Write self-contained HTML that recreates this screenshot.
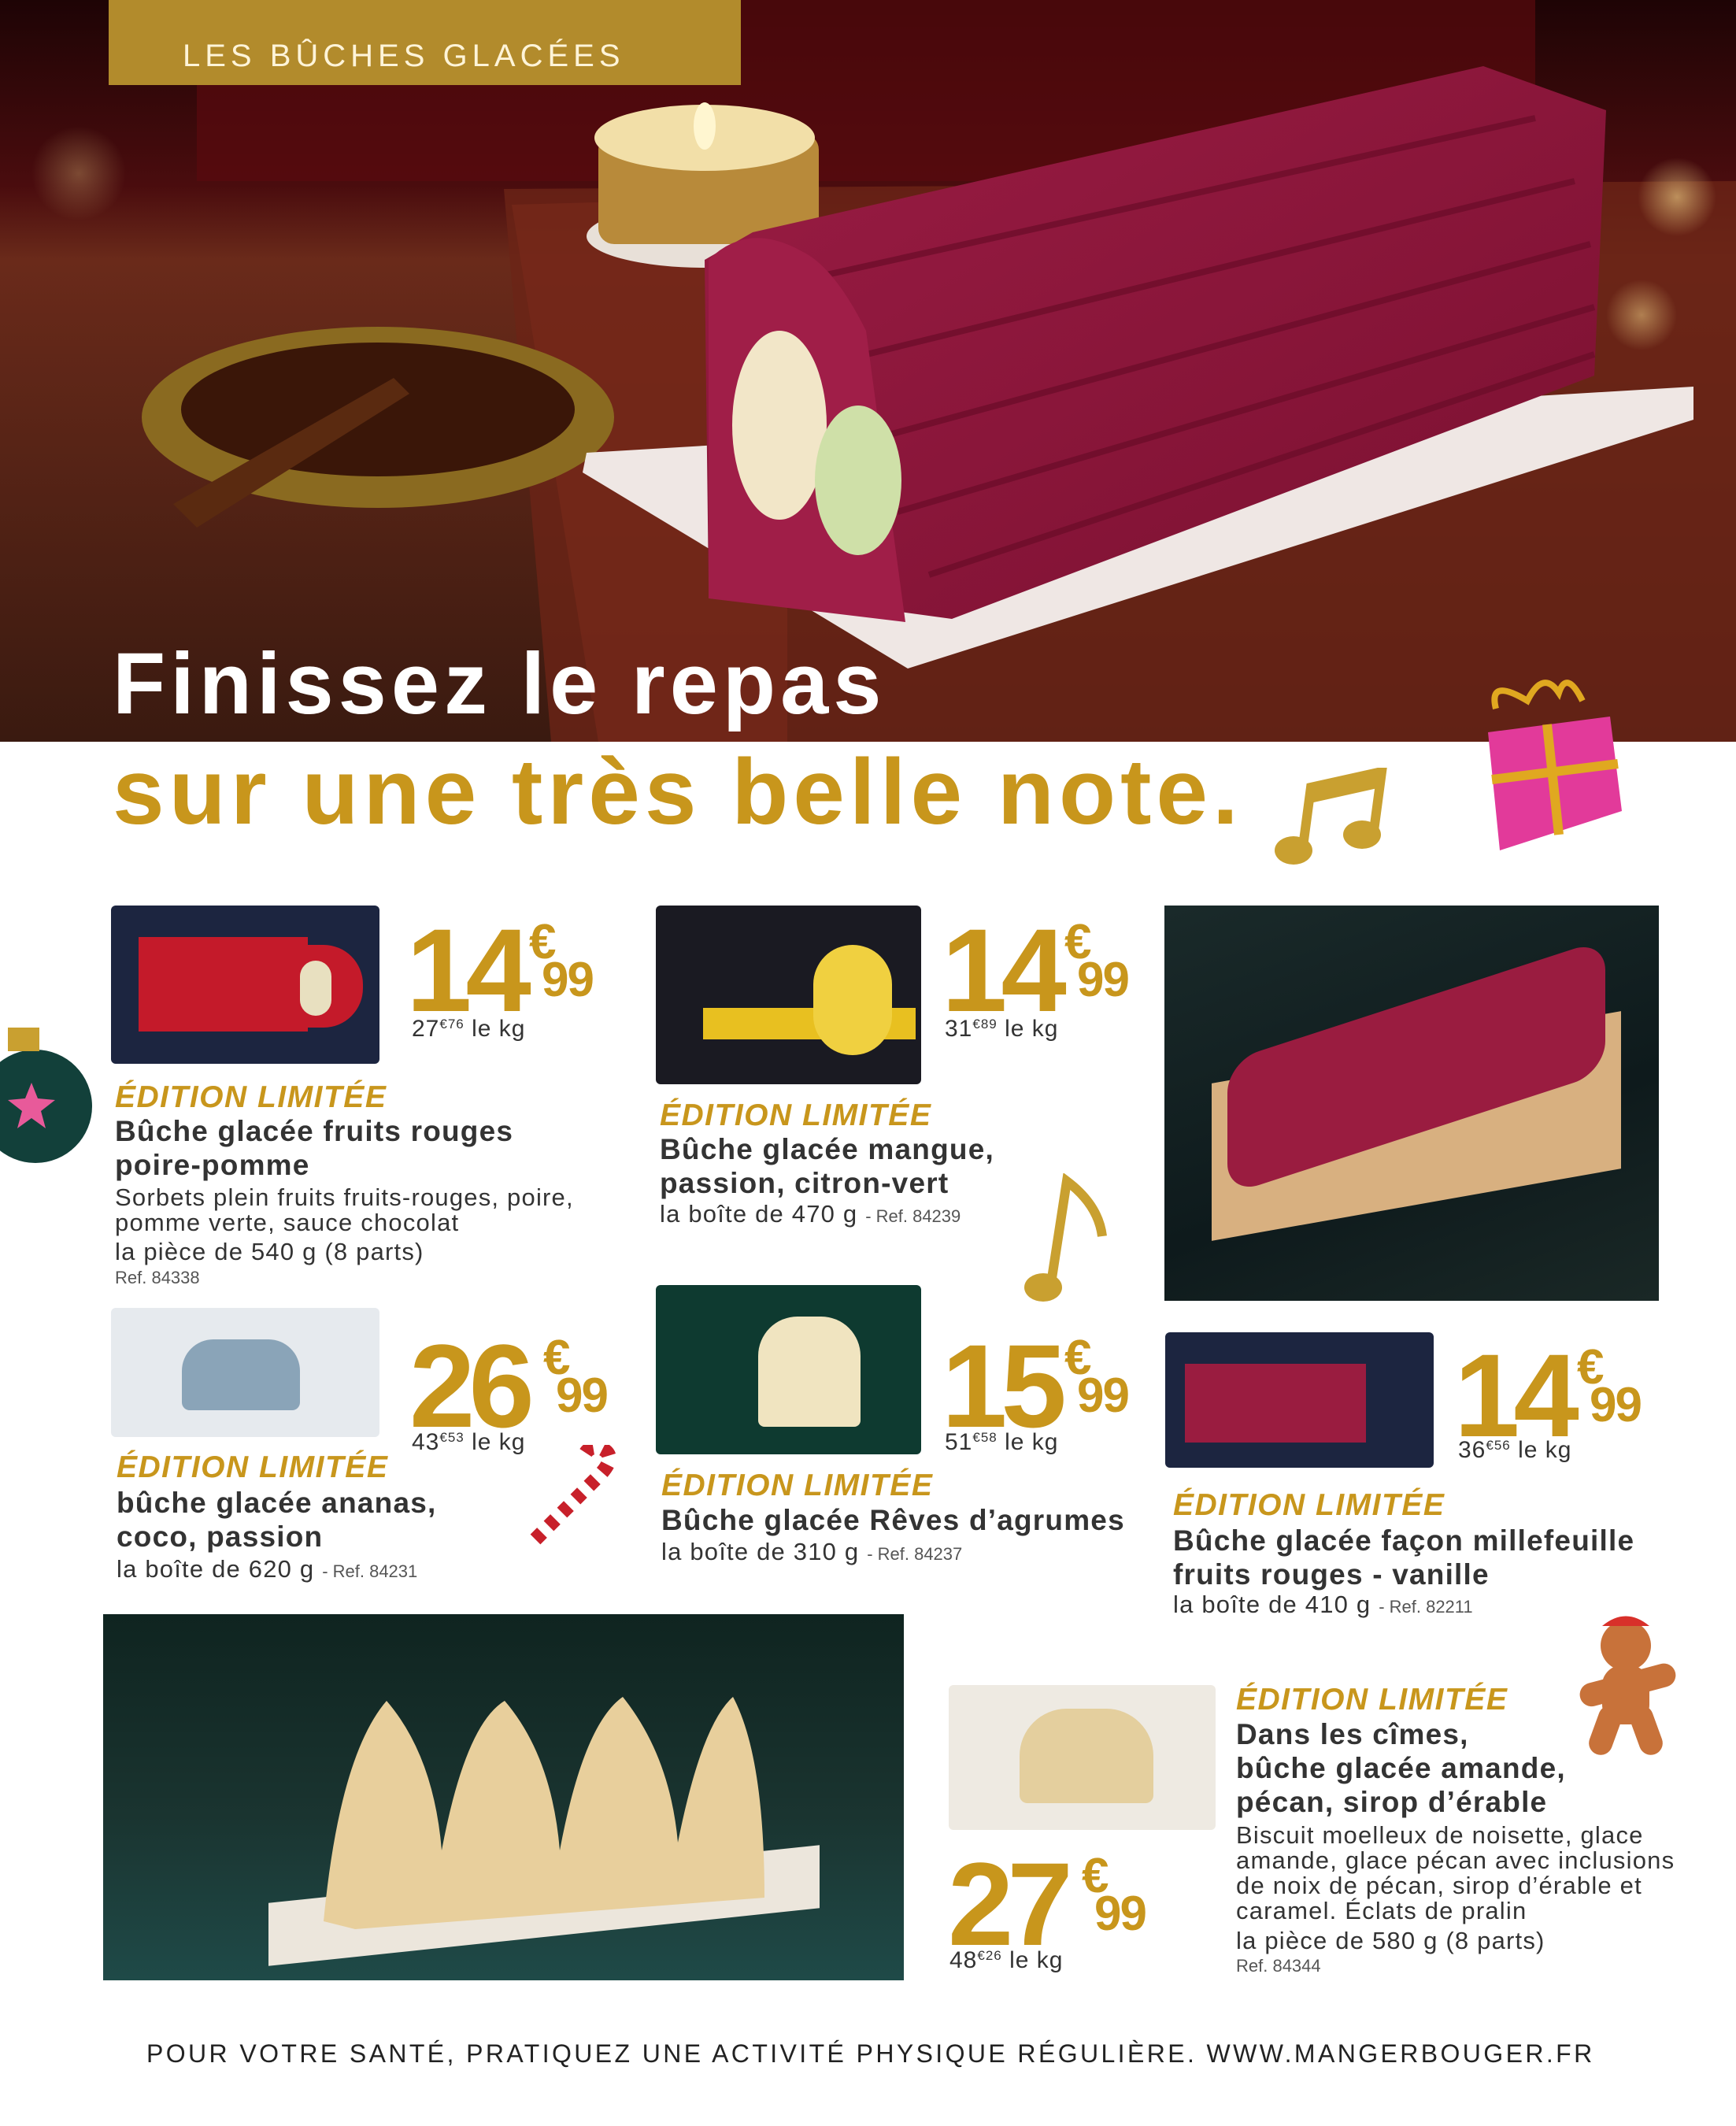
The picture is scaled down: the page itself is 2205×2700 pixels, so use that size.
<!DOCTYPE html>
<html><head><meta charset="utf-8">
<style>
*{margin:0;padding:0;box-sizing:border-box}
body{width:2205px;height:2700px;background:#fff;position:relative;overflow:hidden;font-family:"Liberation Sans",sans-serif;color:#333}
.a{position:absolute;white-space:nowrap}
.ed{font-weight:bold;font-style:italic;color:#c8961c;font-size:39px;letter-spacing:1.5px}
.ti{font-weight:bold;font-size:37px;line-height:43px;color:#333;letter-spacing:1.2px}
.ds{font-size:31px;line-height:32px;color:#333;letter-spacing:1.2px}
.rf{font-size:22px;color:#555;letter-spacing:0}
.pr{position:absolute;color:#c8961c;font-weight:bold;height:120px}
.pr .n{position:absolute;left:0;top:0;font-size:150px;line-height:120px;letter-spacing:-8px}
.pr .e{position:absolute;top:-6px;font-size:62px;line-height:62px}
.pr .c{position:absolute;top:42px;font-size:62px;line-height:62px;letter-spacing:-2px}
.kg{position:absolute;font-size:30px;color:#333;letter-spacing:1px}
.kg sup{font-size:17px;vertical-align:10px}
.box{position:absolute;border-radius:6px}
</style></head><body>

<svg class="a" style="left:0;top:0" width="2205" height="942" viewBox="0 0 2205 942">
<defs>
<linearGradient id="bg" x1="0" y1="0" x2="0" y2="1"><stop offset="0" stop-color="#1e0405"/><stop offset="0.25" stop-color="#4a0c0e"/><stop offset="0.35" stop-color="#6a2a1a"/><stop offset="1" stop-color="#3a1a10"/></linearGradient>
<linearGradient id="bu" x1="0" y1="0" x2="1" y2="1"><stop offset="0" stop-color="#9a1c44"/><stop offset="1" stop-color="#7a1030"/></linearGradient>
<radialGradient id="gl"><stop offset="0" stop-color="#f6d98a"/><stop offset="1" stop-color="#f6d98a" stop-opacity="0"/></radialGradient>
</defs>
<rect width="2205" height="942" fill="url(#bg)"/>
<rect x="250" y="0" width="1700" height="230" fill="#5a0a0e" opacity="0.7"/>
<polygon points="640,240 2205,230 2205,942 700,942" fill="#6b2417" opacity="0.8"/>
<polygon points="650,260 1000,250 1000,942 760,942" fill="#7a2a1a" opacity="0.6"/>
<circle cx="2130" cy="250" r="50" fill="url(#gl)" opacity="0.6"/>
<circle cx="2085" cy="400" r="45" fill="url(#gl)" opacity="0.5"/>
<circle cx="100" cy="220" r="60" fill="url(#gl)" opacity="0.3"/>
<ellipse cx="895" cy="300" rx="150" ry="40" fill="#e8e0d8"/>
<rect x="760" y="170" width="280" height="140" rx="20" fill="#b88a3a"/>
<ellipse cx="895" cy="175" rx="140" ry="42" fill="#f2dfa8"/>
<ellipse cx="895" cy="160" rx="14" ry="30" fill="#fff6d0"/>
<ellipse cx="480" cy="530" rx="300" ry="115" fill="#8a6a20"/>
<ellipse cx="480" cy="520" rx="250" ry="85" fill="#3a1608"/>
<polygon points="220,640 500,480 520,500 250,670" fill="#5a2a10"/>
<polygon points="745,575 2151,491 2151,533 1153,849 740,600" fill="#efe7e4"/>
<polygon points="956,295 1884,84 2040,140 2025,477 1209,786 900,744 895,330" fill="url(#bu)"/>
<g stroke="#6a0c28" stroke-width="8" fill="none" opacity="0.7">
<path d="M1000,360 L1950,150"/><path d="M1060,460 L2000,230"/><path d="M1100,560 L2020,310"/><path d="M1140,650 L2025,390"/><path d="M1180,730 L2025,450"/>
</g>
<path d="M900,330 Q950,280 1020,320 Q1060,340 1100,420 L1150,790 L900,760 Z" fill="#a01e48"/>
<ellipse cx="990" cy="540" rx="60" ry="120" fill="#f2e6c8"/>
<ellipse cx="1090" cy="610" rx="55" ry="95" fill="#cfe0a8"/>
<rect x="138" y="0" width="803" height="108" fill="#b28b2c"/>
<text x="232" y="84" fill="#fff4d8" font-family="Liberation Sans" font-size="40" letter-spacing="6">LES BÛCHES GLACÉES</text>
<text x="143" y="906" fill="#fff" font-family="Liberation Sans" font-weight="bold" font-size="110" letter-spacing="6">Finissez le repas</text>
</svg>
<div class="a" style="left:143px;top:946px;font-size:118px;font-weight:bold;color:#c8961c;letter-spacing:6px;line-height:120px">sur une très belle note.</div>

<svg class="a" style="left:1615px;top:975px" width="150" height="130" viewBox="0 0 150 130"><path d="M40,100 L50,25 L140,5 L130,80" stroke="#c9a030" stroke-width="12" fill="none"/><path d="M48,35 L138,15" stroke="#c9a030" stroke-width="20"/><ellipse cx="28" cy="105" rx="24" ry="18" fill="#c9a030"/><ellipse cx="115" cy="85" rx="24" ry="18" fill="#c9a030"/></svg>
<svg class="a" style="left:1870px;top:850px" width="200" height="230" viewBox="0 0 200 230"><path d="M30,50 Q20,10 70,40 Q90,0 110,30 Q120,0 140,40" stroke="#e0a820" stroke-width="8" fill="none"/><polygon points="20,80 175,60 190,180 35,230" fill="#e23a9a"/><path d="M95,70 L110,210 M25,140 L185,120" stroke="#e0a820" stroke-width="12"/></svg>
<svg class="a" style="left:0;top:1285px" width="130" height="200" viewBox="0 0 130 200"><circle cx="45" cy="120" r="72" fill="#12403a"/><rect x="10" y="20" width="40" height="30" fill="#c9a030"/><polygon points="40,90 48,110 70,112 52,126 58,148 40,135 22,148 28,126 10,112 32,110" fill="#e85a9a"/></svg>
<svg class="a" style="left:660px;top:1835px" width="140" height="140" viewBox="0 0 140 140"><path d="M20,120 L100,40 Q125,15 105,5 Q85,-2 80,20" stroke="#fff" stroke-width="18" fill="none"/><path d="M20,120 L100,40 Q125,15 105,5 Q85,-2 80,20" stroke="#c8202a" stroke-width="18" stroke-dasharray="12 12" fill="none"/></svg>
<svg class="a" style="left:1300px;top:1490px" width="110" height="170" viewBox="0 0 110 170"><path d="M35,140 L55,10 Q95,40 100,80" stroke="#c9a030" stroke-width="12" fill="none"/><ellipse cx="25" cy="145" rx="24" ry="18" fill="#c9a030"/></svg>
<svg class="a" style="left:2005px;top:2045px" width="130" height="190" viewBox="0 0 130 190"><circle cx="60" cy="45" r="32" fill="#c8723a"/><path d="M30,20 Q60,-5 90,20" fill="#d8302a"/><rect x="30" y="70" width="60" height="75" rx="25" fill="#c8723a"/><rect x="0" y="80" width="125" height="30" rx="15" fill="#c8723a" transform="rotate(-15 62 95)"/><rect x="20" y="120" width="30" height="65" rx="15" fill="#c8723a" transform="rotate(20 35 150)"/><rect x="70" y="120" width="30" height="65" rx="15" fill="#c8723a" transform="rotate(-20 85 150)"/></svg>

<div class="box" style="left:141px;top:1150px;width:341px;height:201px;background:#1c2540"><div style="position:absolute;left:35px;top:40px;width:215px;height:120px;background:#c41a2a"></div><div style="position:absolute;left:230px;top:50px;width:90px;height:105px;background:#c41a2a;border-radius:0 50px 50px 0"></div><div style="position:absolute;left:240px;top:70px;width:40px;height:70px;background:#e8e0c0;border-radius:20px"></div></div>
<div class="pr" style="left:516px;top:1172px"><span class="n">14</span><span class="e" style="left:156px">€</span><span class="c" style="left:172px">99</span></div>
<div class="kg" style="left:523px;top:1290px">27<sup>€76</sup> le kg</div>
<div class="a ed" style="left:146px;top:1372px">ÉDITION LIMITÉE</div>
<div class="a ti" style="left:146px;top:1415px">Bûche glacée fruits rouges<br>poire-pomme</div>
<div class="a ds" style="left:146px;top:1505px">Sorbets plein fruits fruits-rouges, poire,<br>pomme verte, sauce chocolat</div>
<div class="a ds" style="left:146px;top:1574px">la pièce de 540 g (8 parts)</div>
<div class="a rf" style="left:146px;top:1610px">Ref. 84338</div>

<div class="box" style="left:833px;top:1150px;width:337px;height:227px;background:#1a1a22"><div style="position:absolute;left:60px;top:130px;width:270px;height:40px;background:#e8c020"></div><div style="position:absolute;left:200px;top:50px;width:100px;height:140px;background:#f0d040;border-radius:50px"></div></div>
<div class="pr" style="left:1196px;top:1172px"><span class="n">14</span><span class="e" style="left:156px">€</span><span class="c" style="left:172px">99</span></div>
<div class="kg" style="left:1200px;top:1290px">31<sup>€89</sup> le kg</div>
<div class="a ed" style="left:838px;top:1395px">ÉDITION LIMITÉE</div>
<div class="a ti" style="left:838px;top:1438px">Bûche glacée mangue,<br>passion, citron-vert</div>
<div class="a ds" style="left:838px;top:1526px">la boîte de 470 g <span class="rf">- Ref. 84239</span></div>

<div class="a" style="left:1479px;top:1150px;width:628px;height:502px;background:linear-gradient(160deg,#1a2a2a,#0e1a1c 60%,#1a2826)"><div style="position:absolute;left:60px;top:180px;width:520px;height:200px;background:#d8b080;transform:skewY(-10deg)"></div><div style="position:absolute;left:80px;top:120px;width:480px;height:170px;background:#9a1c40;border-radius:40px;transform:skewY(-18deg)"></div></div>

<div class="box" style="left:141px;top:1661px;width:341px;height:164px;background:#e6eaee"><div style="position:absolute;left:90px;top:40px;width:150px;height:90px;background:#8aa4b8;border-radius:40px 40px 10px 10px"></div></div>
<div class="pr" style="left:520px;top:1700px"><span class="n">26</span><span class="e" style="left:170px">€</span><span class="c" style="left:186px">99</span></div>
<div class="kg" style="left:523px;top:1815px">43<sup>€53</sup> le kg</div>
<div class="a ed" style="left:148px;top:1842px">ÉDITION LIMITÉE</div>
<div class="a ti" style="left:148px;top:1887px">bûche glacée ananas,<br>coco, passion</div>
<div class="a ds" style="left:148px;top:1977px">la boîte de 620 g <span class="rf">- Ref. 84231</span></div>

<div class="box" style="left:833px;top:1632px;width:337px;height:215px;background:#0e3a30"><div style="position:absolute;left:130px;top:40px;width:130px;height:140px;background:#f0e4c0;border-radius:50px 50px 8px 8px"></div></div>
<div class="pr" style="left:1196px;top:1700px"><span class="n">15</span><span class="e" style="left:156px">€</span><span class="c" style="left:172px">99</span></div>
<div class="kg" style="left:1200px;top:1815px">51<sup>€58</sup> le kg</div>
<div class="a ed" style="left:840px;top:1865px">ÉDITION LIMITÉE</div>
<div class="a ti" style="left:840px;top:1909px">Bûche glacée Rêves d’agrumes</div>
<div class="a ds" style="left:840px;top:1955px">la boîte de 310 g <span class="rf">- Ref. 84237</span></div>

<div class="box" style="left:1480px;top:1692px;width:341px;height:172px;background:#1c2540"><div style="position:absolute;left:25px;top:40px;width:230px;height:100px;background:#9a1c40"></div></div>
<div class="pr" style="left:1847px;top:1712px"><span class="n">14</span><span class="e" style="left:156px">€</span><span class="c" style="left:172px">99</span></div>
<div class="kg" style="left:1852px;top:1825px">36<sup>€56</sup> le kg</div>
<div class="a ed" style="left:1490px;top:1890px">ÉDITION LIMITÉE</div>
<div class="a ti" style="left:1490px;top:1935px">Bûche glacée façon millefeuille<br>fruits rouges - vanille</div>
<div class="a ds" style="left:1490px;top:2022px">la boîte de 410 g <span class="rf">- Ref. 82211</span></div>

<div class="a" style="left:131px;top:2050px;width:1017px;height:465px;background:linear-gradient(180deg,#0f2420,#1a3430 55%,#1f4a48)"><div style="position:absolute;left:210px;top:330px;width:700px;height:80px;background:#ece6dc;transform:skewY(-6deg)"></div><svg style="position:absolute;left:280px;top:100px" width="560" height="300" viewBox="0 0 560 300"><path d="M0,290 Q20,80 80,10 Q140,80 150,200 Q180,40 230,10 Q290,80 300,200 Q330,40 380,5 Q440,80 450,190 Q480,40 520,5 Q560,80 560,260 L40,300 Z" fill="#e8cf9c"/></svg></div>

<div class="box" style="left:1205px;top:2140px;width:339px;height:184px;background:#eeeae2"><div style="position:absolute;left:90px;top:30px;width:170px;height:120px;background:#e4cf9e;border-radius:60px 60px 10px 10px"></div></div>
<div class="pr" style="left:1204px;top:2358px"><span class="n">27</span><span class="e" style="left:170px">€</span><span class="c" style="left:186px">99</span></div>
<div class="kg" style="left:1206px;top:2473px">48<sup>€26</sup> le kg</div>
<div class="a ed" style="left:1570px;top:2137px">ÉDITION LIMITÉE</div>
<div class="a ti" style="left:1570px;top:2181px">Dans les cîmes,<br>bûche glacée amande,<br>pécan, sirop d’érable</div>
<div class="a ds" style="left:1570px;top:2315px">Biscuit moelleux de noisette, glace<br>amande, glace pécan avec inclusions<br>de noix de pécan, sirop d’érable et<br>caramel. Éclats de pralin</div>
<div class="a ds" style="left:1570px;top:2449px">la pièce de 580 g (8 parts)</div>
<div class="a rf" style="left:1570px;top:2484px">Ref. 84344</div>

<div class="a" style="left:186px;top:2590px;font-size:32px;letter-spacing:3.4px;color:#222">POUR VOTRE SANTÉ, PRATIQUEZ UNE ACTIVITÉ PHYSIQUE RÉGULIÈRE. WWW.MANGERBOUGER.FR</div>
</body></html>
